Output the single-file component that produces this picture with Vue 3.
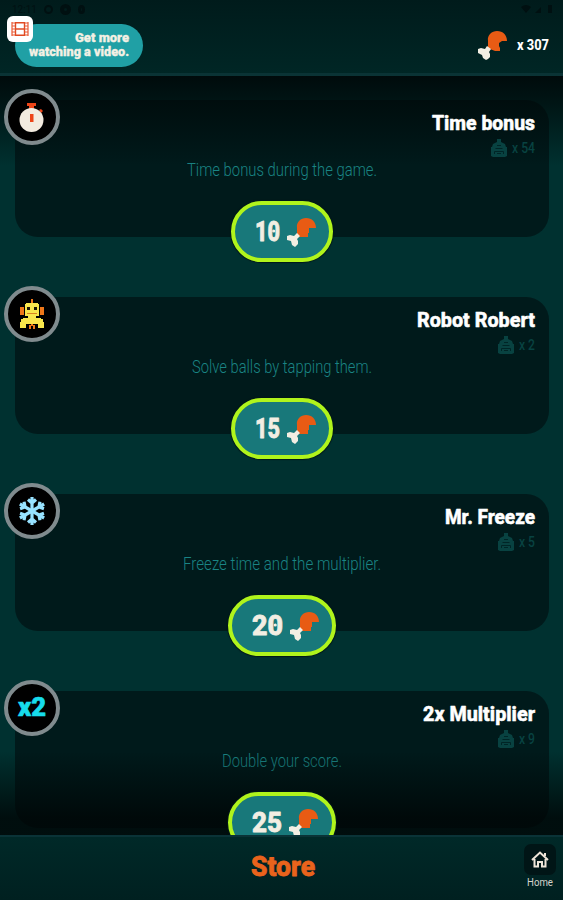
<template>
  <div class="screen">
    <header class="topbar">
      <div class="status">
        <div class="status-left"><span class="clock">12:11</span><i></i><i class="filled"></i><i class="small"></i></div>
        <svg width="34" height="10" viewBox="0 0 34 10">
          <path d="M1 3Q6-1 11 3L6 9Z M15 9L21 3V9Z M28 1h4v8h-4Z" />
        </svg>
      </div>
      <div class="topbar-row">
        <button class="video-btn">
          <span class="film">
            <svg width="18" height="14" viewBox="0 0 18 14">
              <path class="film-frame" d="M4.5 0.7H13.5V13.3H4.5Z M4.5 7h9" />
              <path class="film-edge" d="M1 0V14 M17 0V14 M1 1H4 M1 4H4 M1 7H4 M1 10H4 M1 13H4 M14 1H17 M14 4H17 M14 7H17 M14 10H17 M14 13H17" />
            </svg>
          </span>
          <svg class="label" width="102" height="34">
            <text x="102" y="15" text-anchor="end" textLength="54" lengthAdjust="spacingAndGlyphs">Get more</text>
            <text x="102" y="29" text-anchor="end" textLength="100" lengthAdjust="spacingAndGlyphs">watching a video.</text>
          </svg>
        </button>
        <div class="wallet">
          <svg class="leg" width="29" height="30" viewBox="0 0 29 30">
            <path class="meat" d="M10 20V11C9 5 14 1 19 1C25 1 29 5 29 11H24L21 13V16L22 18V21H17L12 19Z" />
            <path class="bone" d="M9 16L13 19L11 22L12 24V27L10 29L8 30L5 28L4 25L0 23V19L3 18L7 19Z" />
          </svg>
          <svg class="count" width="33" height="18">
            <text x="33" y="14" text-anchor="end" textLength="32" lengthAdjust="spacingAndGlyphs">x 307</text>
          </svg>
        </div>
      </div>
    </header>

    <main class="list">
      <section v-for="item in items" :key="item.id" class="card">
        <div class="badge">
          <svg v-if="item.id === 'time'" width="26" height="32" viewBox="0 0 26 32">
            <path fill="#ed4518" d="M8 2H17V5H15V8H10V5H8Z M20 9L22 8L24 10L22 12Z" />
            <circle cx="12.5" cy="19" r="12" fill="#f3ebdf" />
            <path fill="#ed4518" d="M11 13h3.5v8H11Z" />
          </svg>
          <svg v-else-if="item.id === 'robot'" width="26" height="30" viewBox="0 0 26 30" shape-rendering="crispEdges">
            <path fill="#ef7719" d="M12 0h2v5h-2z M1 8h4v8H1z M21 8h4v8h-4z M10 26h2v4h-2z M12 25h2v2h-2z M14 26h2v4h-2z" />
            <path fill="#f9e64c" d="M7 4H19V5H20V17H17V19H22V20H24V23H25V29H19V25H7V29H1V23H2V20H4V19H9V17H6V5H7Z" />
            <path fill="#1b1606" d="M8 8h3v3H8z M15 8h3v3h-3z" />
            <path fill="#d98421" d="M8 14h10v1H8z" />
          </svg>
          <svg v-else-if="item.id === 'freeze'" width="28" height="30" viewBox="-14 -15 28 30">
            <g v-for="angle in [0, 60, 120, 180, 240, 300]" :key="angle" :transform="`rotate(${angle})`">
              <path class="flake" d="M0 0V-14 M-4 -11.5L0 -8L4 -11.5" />
            </g>
          </svg>
          <svg v-else width="30" height="26">
            <text class="x2" x="1" y="21" textLength="28" lengthAdjust="spacingAndGlyphs">x2</text>
          </svg>
        </div>
        <svg class="title" :width="item.titleWidth" height="26">
          <text x="0" y="20" :textLength="item.titleWidth" lengthAdjust="spacingAndGlyphs">{{ item.title }}</text>
        </svg>
        <div class="owned">
          <svg width="16" height="18" viewBox="0 0 16 18">
            <path class="bag" d="M6 3V0H10V3L14 5L15 8H16V17L14 18H2L0 17V8H1L2 5Z" />
            <path class="bag-lines" d="M6 6.5H10 M4.5 9.5H11.5 M3.5 15V12.5H12.5V15 M6 14.5H10" />
          </svg>
          <svg :width="item.ownedWidth" height="16">
            <text x="0" y="13" :textLength="item.ownedWidth" lengthAdjust="spacingAndGlyphs">x {{ item.owned }}</text>
          </svg>
        </div>
        <svg class="desc" :width="item.descWidth" height="24">
          <text x="0" y="18" :textLength="item.descWidth" lengthAdjust="spacingAndGlyphs">{{ item.desc }}</text>
        </svg>
        <button class="price" :class="{ wide: item.price >= 20 }">
          <svg class="amount" :width="item.priceWidth" height="28">
            <text x="0" y="24" :textLength="item.priceWidth" lengthAdjust="spacingAndGlyphs">{{ item.price }}</text>
            <circle v-if="item.price % 10 === 0" :cx="item.priceWidth * 0.75" cy="14" r="1.6" fill="#f2eee3" />
          </svg>
          <svg class="leg" width="29" height="30" viewBox="0 0 29 30">
            <path class="meat" d="M10 20V11C9 5 14 1 19 1C25 1 29 5 29 11H22V16H21V20Z" />
            <path class="bone" d="M10 16L13 19L10 22L11 24V27L8 30L5 28L4 24L0 23V19L3 18L7 19Z" />
          </svg>
        </button>
      </section>
    </main>

    <footer class="bottombar">
      <svg class="store" width="66" height="34">
        <text x="2" y="25" textLength="64" lengthAdjust="spacingAndGlyphs">Store</text>
      </svg>
      <button class="home">
        <span class="home-icon">
          <svg width="18" height="17" viewBox="0 0 18 17">
            <path d="M1 9L9 1.5L17 9 M3.5 8V15.5H7V11H11V15.5H14.5V8 M14 5V2" />
          </svg>
        </span>
        <svg class="home-label" width="26" height="14">
          <text x="0" y="11" textLength="26" lengthAdjust="spacingAndGlyphs">Home</text>
        </svg>
      </button>
    </footer>
  </div>
</template>

<script setup>
const items = [
  { id: 'time', title: 'Time bonus', titleWidth: 103, owned: 54, ownedWidth: 23, desc: 'Time bonus during the game.', descWidth: 190, price: 10, priceWidth: 25 },
  { id: 'robot', title: 'Robot Robert', titleWidth: 118, owned: 2, ownedWidth: 16, desc: 'Solve balls by tapping them.', descWidth: 180, price: 15, priceWidth: 25 },
  { id: 'freeze', title: 'Mr. Freeze', titleWidth: 90, owned: 5, ownedWidth: 16, desc: 'Freeze time and the multiplier.', descWidth: 198, price: 20, priceWidth: 31 },
  { id: 'double', title: '2x Multiplier', titleWidth: 112, owned: 9, ownedWidth: 16, desc: 'Double your score.', descWidth: 120, price: 25, priceWidth: 30 }
]
</script>

<style>
body {
  margin: 0;
  background: #003130;
}
</style>

<style scoped>
.screen {
  display: flex;
  flex-direction: column;
  width: 563px;
  height: 900px;
  overflow: hidden;
  background: #003130;
  font-family: Roboto, "Open Sans", sans-serif;
}

svg {
  display: block;
  flex: none;
  overflow: visible;
}

button {
  padding: 0;
  border: 0;
  background: none;
  font-family: inherit;
}

.topbar {
  box-sizing: border-box;
  height: 76px;
  flex: none;
  border-bottom: 3px solid #0a3335;
  background: linear-gradient(#001b1b, #002625);
}

.status {
  display: flex;
  justify-content: space-between;
  height: 18px;
  padding: 4px 9px 0 12px;
  box-sizing: border-box;
  fill: #001011;
}

.status-left {
  display: flex;
  align-items: center;
  gap: 7px;
  height: 10px;
  color: #001011;
  font-size: 10px;
}

.clock {
  width: 25px;
}

.status i {
  box-sizing: border-box;
  width: 9px;
  height: 9px;
  border: 2px solid #001011;
  border-radius: 50%;
}

.status i.filled {
  width: 11px;
  height: 11px;
  border-width: 4px;
}

.status i.small {
  width: 7px;
  border-width: 3px;
}

.topbar-row {
  display: flex;
  justify-content: space-between;
  padding: 6px 14px 0 15px;
}

.video-btn {
  position: relative;
  display: flex;
  justify-content: flex-end;
  box-sizing: border-box;
  width: 128px;
  height: 43px;
  padding: 3px 14px 0 0;
  border-radius: 22px;
  background: #20a0a5;
}

.film {
  position: absolute;
  left: -8px;
  top: -8px;
  display: flex;
  align-items: center;
  justify-content: center;
  width: 26px;
  height: 26px;
  border-radius: 6px;
  background: #fff;
}

.film-frame {
  fill: none;
  stroke: #e04a22;
  stroke-width: 1.4;
}

.film-edge {
  fill: none;
  stroke: #e95a35;
  stroke-width: 1.2;
}

.label text {
  fill: #f4f0e4;
  stroke: #f4f0e4;
  stroke-width: 0.3;
  font-size: 13px;
  font-weight: 900;
}

.wallet {
  display: flex;
  gap: 9px;
  padding-top: 6px;
}

.wallet .count {
  margin-top: 6px;
}

.count text {
  fill: #fff;
  font-size: 14px;
  font-weight: 800;
}

.meat {
  fill: #e85b14;
}

.bone {
  fill: #f2eee3;
}

.list {
  position: relative;
  display: flex;
  flex-direction: column;
  gap: 60px;
  height: 759px;
  box-sizing: border-box;
  padding: 24px 14px 0 15px;
  overflow: hidden;
}

.list::before {
  content: "";
  position: absolute;
  inset: 0;
  background: linear-gradient(rgba(0, 4, 5, 0.85), rgba(0, 8, 8, 0.65) 30px, transparent 90px, transparent 675px, rgba(0, 5, 5, 0.8) 742px, rgba(0, 5, 5, 0.8));
  z-index: 1;
  pointer-events: none;
}

.card {
  position: relative;
  display: flex;
  flex-direction: column;
  flex: none;
  align-items: flex-end;
  box-sizing: border-box;
  height: 137px;
  padding: 10px 14px 0 0;
  border-radius: 23px;
  background: #001a1b;
}

.badge {
  position: absolute;
  left: -11px;
  top: -11px;
  z-index: 2;
  display: flex;
  align-items: center;
  justify-content: center;
  box-sizing: border-box;
  width: 56px;
  height: 56px;
  border: 4px solid #808b8e;
  border-radius: 50%;
  background: #000;
}

.flake {
  fill: none;
  stroke: #98e2ff;
  stroke-width: 3.2;
}

.x2 {
  fill: #17dceb;
  stroke: #17dceb;
  stroke-width: 0.6;
  font-size: 26px;
  font-weight: 900;
}

.title {
  position: relative;
  z-index: 2;
}

.title text {
  fill: #fff;
  stroke: #fff;
  stroke-width: 0.5;
  stroke-linejoin: round;
  font-size: 21px;
  font-weight: 800;
}

.owned {
  position: relative;
  z-index: 2;
  display: flex;
  align-items: center;
  gap: 5px;
  height: 18px;
  margin-top: 3px;
}

.owned text {
  fill: #084241;
  font-size: 14px;
  font-weight: 500;
}

.bag {
  fill: #084241;
}

.bag-lines {
  fill: none;
  stroke: #002526;
}

.desc {
  align-self: center;
  margin: 1px -14px 0 0;
}

.desc text {
  fill: #1a8484;
  font-size: 18px;
  font-weight: 300;
}

.price {
  position: relative;
  z-index: 2;
  align-self: center;
  display: flex;
  align-items: center;
  justify-content: center;
  gap: 7px;
  flex: none;
  box-sizing: border-box;
  width: 102px;
  height: 61px;
  margin: 19px -14px 0 0;
  padding-left: 6px;
  border: 4px solid #b0f41c;
  border-radius: 31px;
  background: #18787a;
  box-shadow: 0 0 1px 1px #001819;
}

.price.wide {
  width: 108px;
}

.amount text {
  fill: #f2eee3;
  stroke: #f2eee3;
  stroke-width: 0.8;
  stroke-linejoin: round;
  font-size: 28px;
  font-weight: 800;
}

.price .amount {
  margin-bottom: 1px;
}

.bottombar {
  position: relative;
  display: flex;
  justify-content: center;
  box-sizing: border-box;
  height: 65px;
  padding-top: 14px;
  border-top: 2px solid #0a3337;
  background: linear-gradient(#002928, #002020);
}

.store text {
  fill: #e9631c;
  stroke: #e9631c;
  stroke-width: 0.8;
  stroke-linejoin: round;
  font-size: 28px;
  font-weight: 800;
}

.home {
  position: absolute;
  right: 7px;
  top: 7px;
  display: flex;
  flex-direction: column;
  align-items: center;
}

.home-icon {
  display: flex;
  align-items: center;
  justify-content: center;
  width: 32px;
  height: 31px;
  border-radius: 7px;
  background: #001516;
}

.home-icon path {
  fill: none;
  stroke: #eee5d9;
  stroke-width: 2;
}

.home-label text {
  fill: #d4d4cc;
  font-size: 11px;
}
</style>
